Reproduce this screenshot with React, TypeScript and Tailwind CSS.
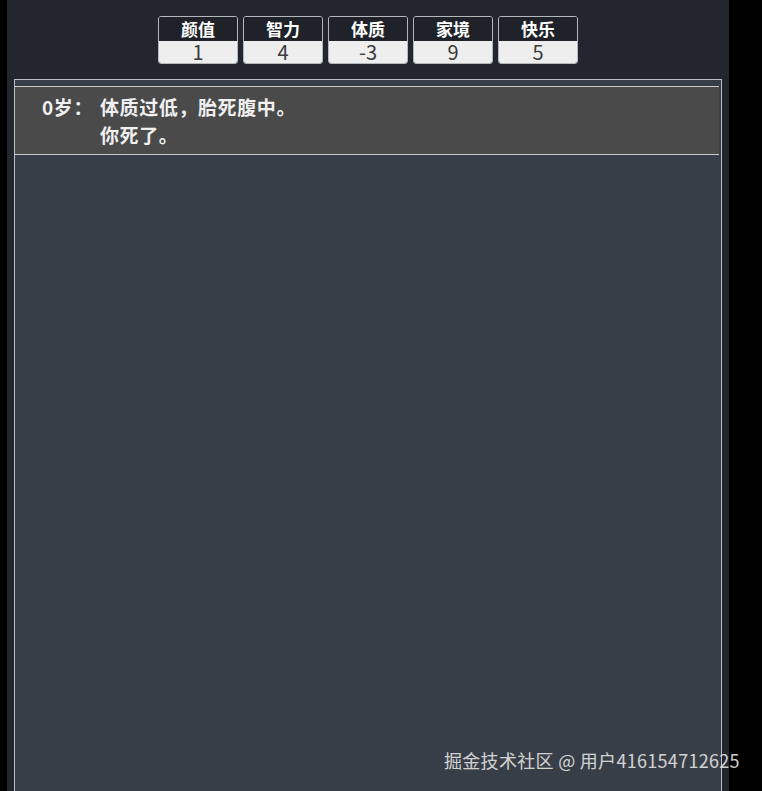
import React from "react";

const stats = [
  { label: "颜值", value: "1" },
  { label: "智力", value: "4" },
  { label: "体质", value: "-3" },
  { label: "家境", value: "9" },
  { label: "快乐", value: "5" },
];

export default function App() {
  return (
    <div
      className="relative flex min-h-[791px] overflow-hidden bg-black"
      style={{ fontFamily: '"Noto Sans CJK SC", "Noto Sans", sans-serif' }}
    >
      <div className="ml-[7px] flex w-[722px] flex-col bg-[#22262e]">
        <div className="flex justify-center gap-[5px] pt-[16px]">
          {stats.map((s) => (
            <div
              key={s.label}
              className="flex h-[48px] w-[80px] flex-col overflow-hidden rounded-[3px] border border-[#b4b7bc]"
            >
              <div className="flex h-[24px] items-center justify-center bg-[#1f2229] text-[17px] font-bold leading-[22px] text-white">
                {s.label}
              </div>
              <div className="flex h-[22px] items-center justify-center bg-[#eeeeee] text-[20px] leading-[22px] text-[#3a3a3a]">
                {s.value}
              </div>
            </div>
          ))}
        </div>
        <div className="mx-[7px] mt-[15px] h-[720px] border border-[#babdc1] bg-[#383e47] pt-[6px]">
          <div className="mr-[2px] flex border-y border-[#c9c9c9] bg-[#4a4a4a] pb-[5px] pl-[27px] pt-[6px] text-[19px] font-bold leading-[28px] tracking-[0.6px] text-[#f0f0f0]">
            <span className="w-[58px] shrink-0">0岁：</span>
            <div className="flex flex-col">
              <span>体质过低，胎死腹中。</span>
              <span>你死了。</span>
            </div>
          </div>
        </div>
      </div>
      <div className="absolute left-[444px] top-[746px] whitespace-nowrap text-[18px] leading-[28px] tracking-[0.3px] text-[#e2e2e2] opacity-90">
        掘金技术社区 @ 用户416154712625
      </div>
    </div>
  );
}
